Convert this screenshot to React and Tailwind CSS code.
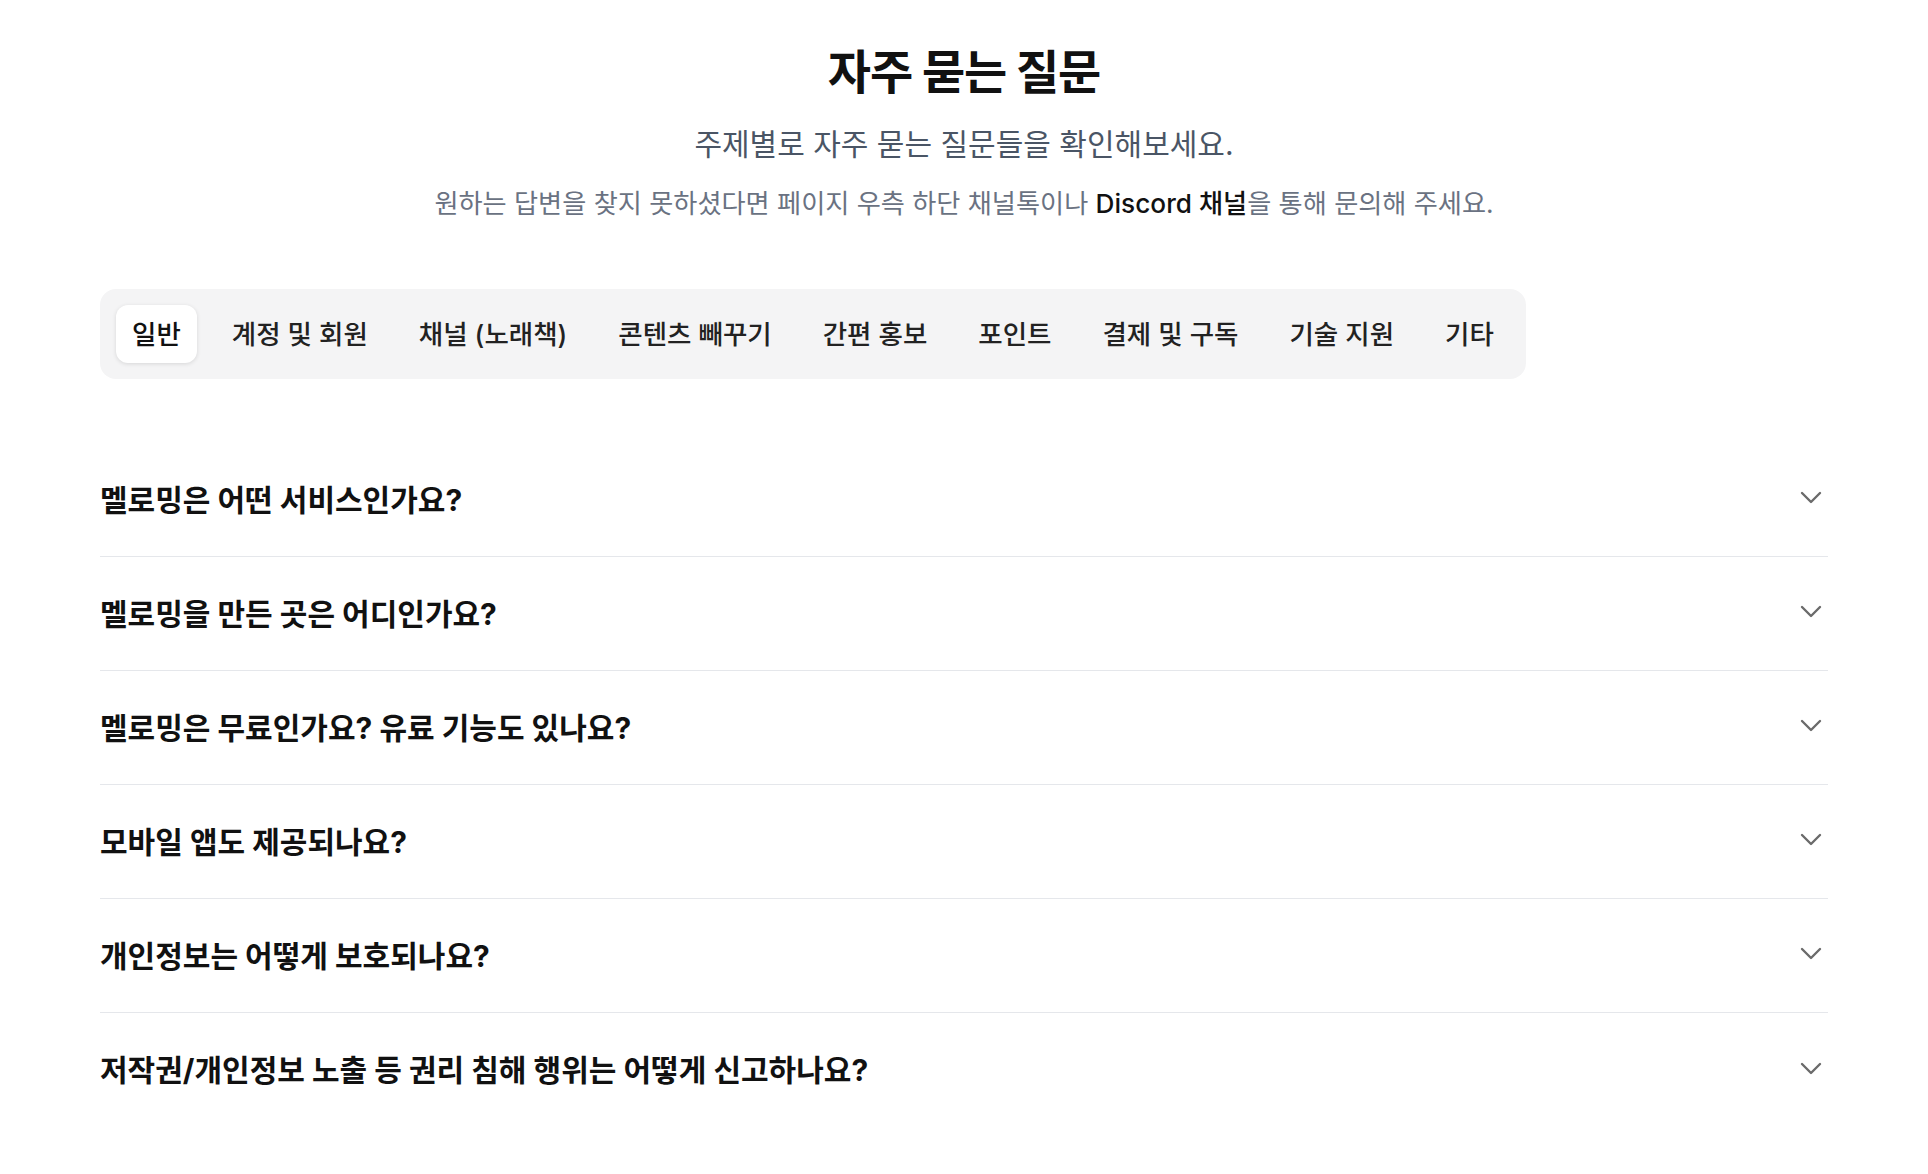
import React from 'react';

const tabs = ['일반', '계정 및 회원', '채널 (노래책)', '콘텐츠 빼꾸기', '간편 홍보', '포인트', '결제 및 구독', '기술 지원', '기타'];

const questions = [
  '멜로밍은 어떤 서비스인가요?',
  '멜로밍을 만든 곳은 어디인가요?',
  '멜로밍은 무료인가요? 유료 기능도 있나요?',
  '모바일 앱도 제공되나요?',
  '개인정보는 어떻게 보호되나요?',
  '저작권/개인정보 노출 등 권리 침해 행위는 어떻게 신고하나요?',
];

const Chevron = () => (
  <svg className="w-[22px] h-[13px] mb-[4px] text-[#6b6b6b] shrink-0" viewBox="0 0 22 13" fill="none" stroke="currentColor">
    <path d="M2 2l9 9 9-9" strokeWidth="2.4" strokeLinecap="round" strokeLinejoin="round" />
  </svg>
);

const App = () => {
  return (
    <div className="min-h-screen bg-white font-['Inter','Noto_Sans_CJK_KR',sans-serif] text-[#111]">
      <div className="flex flex-col items-center pt-[46px]">
        <h1 className="text-[47px] leading-[52px] font-bold tracking-tight">자주 묻는 질문</h1>
        <p className="mt-[28px] text-[30px] leading-[36px] text-gray-600">주제별로 자주 묻는 질문들을 확인해보세요.</p>
        <p className="mt-[26px] text-[26.2px] leading-[32px] text-gray-500">
          원하는 답변을 찾지 못하셨다면 페이지 우측 하단 채널톡이나 <span className="text-[#111] font-medium">Discord 채널</span>을 통해 문의해 주세요.
        </p>
      </div>

      <div className="mx-[100px] mt-[69px]">
        <div className="inline-flex items-center gap-[19px] rounded-2xl bg-[#f4f4f5] p-4">
          {tabs.map((t, i) => (
            <button
              key={t}
              className={
                i === 0
                  ? 'rounded-xl bg-white px-4 py-[13px] text-[26.5px] leading-[32px] font-medium text-[#111] shadow-[0_1px_4px_rgba(0,0,0,0.12)]'
                  : 'rounded-xl px-4 py-[13px] text-[26.5px] leading-[32px] font-medium text-[#222]'
              }
            >
              {t}
            </button>
          ))}
        </div>

        <div className="mt-[64px] divide-y divide-gray-200">
          {questions.map((q) => (
            <div key={q} className="flex h-[114px] items-center justify-between pr-[6px]">
              <span className="text-[30px] leading-[36px] font-bold">{q}</span>
              <Chevron />
            </div>
          ))}
        </div>
      </div>
    </div>
  );
};

export default App;
